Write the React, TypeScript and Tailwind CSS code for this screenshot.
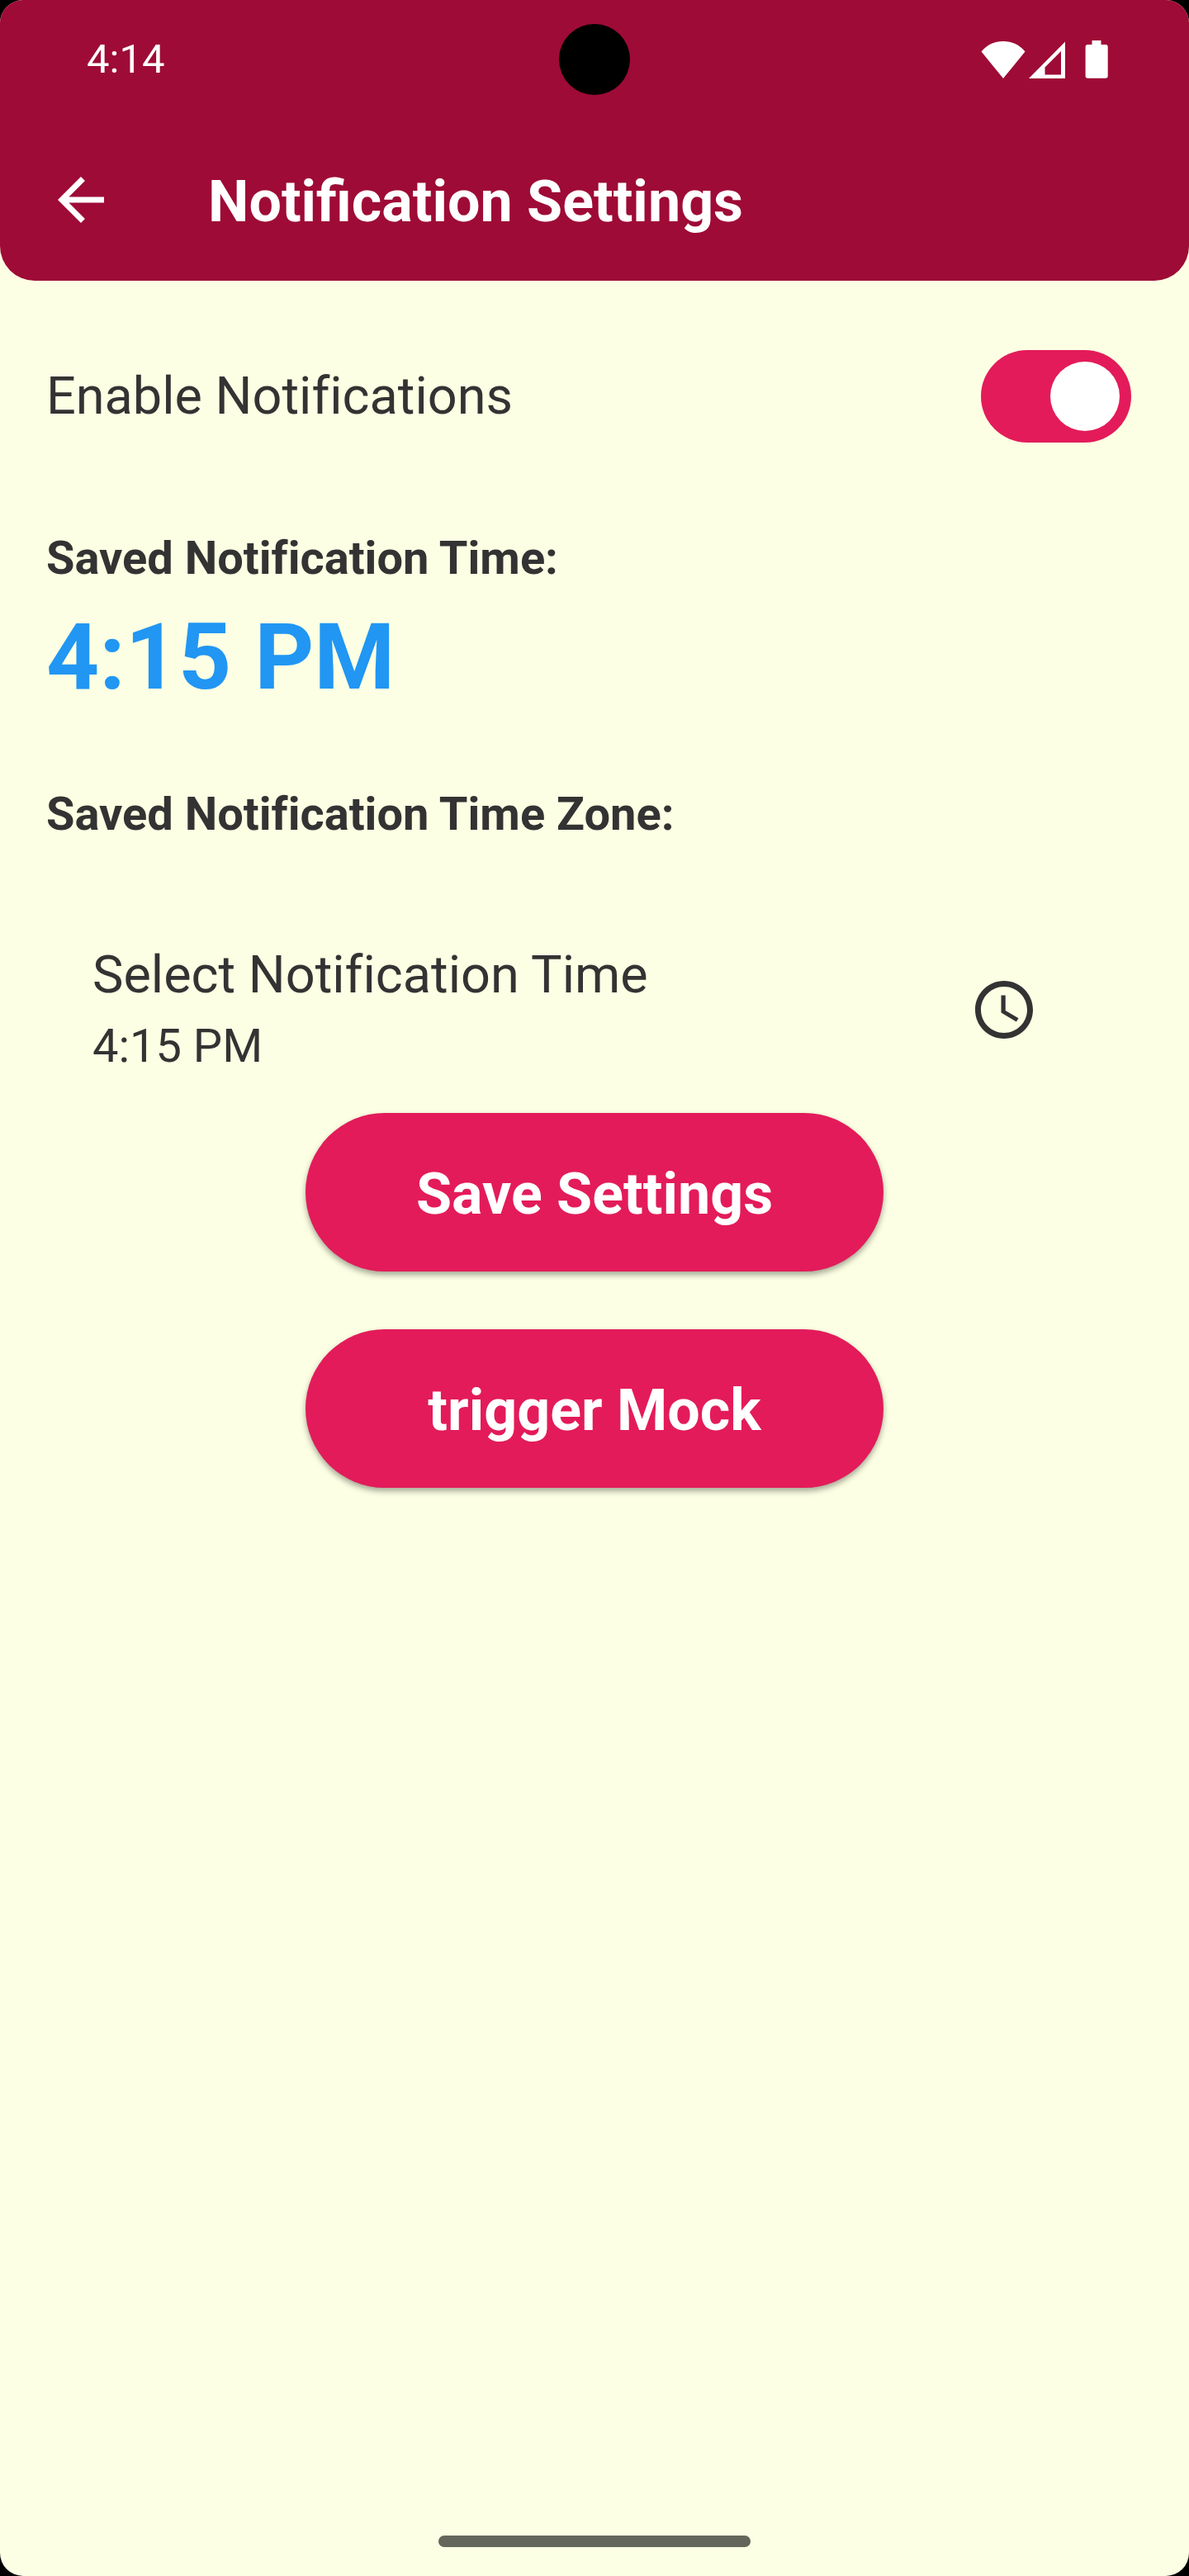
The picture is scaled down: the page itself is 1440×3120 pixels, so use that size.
import { useState } from "react";

function StatusBar() {
  return (
    <div className="relative flex h-36 items-center justify-between pr-[98px] pl-[105px]">
      <span className="text-[49px] leading-[56px]">4:14</span>
      <span className="absolute top-[29px] left-1/2 size-[86px] -translate-x-1/2 rounded-full bg-black" />
      <div className="flex items-center">
        <svg width="54" height="46" viewBox="0 0 54 46" fill="currentColor" aria-hidden="true">
          <path d="M27 46 .5 13.500C7.500 5 16.500 1 27 1s19.500 4 26.500 12.500z" />
        </svg>
        <svg className="ml-1" width="44" height="46" viewBox="0 0 44 46" fill="currentColor" aria-hidden="true">
          <path fillRule="evenodd" d="M44 1.500V46H0zM39 13 19.500 32.500V41.500H39z" />
        </svg>
        <svg className="ml-6" width="28" height="46" viewBox="0 0 28 46" fill="currentColor" aria-hidden="true">
          <path d="M8.500 0h11v5H25a2.700 2.700 0 0 1 2.700 2.700V43a2.700 2.700 0 0 1-2.700 2.700H3.300A2.700 2.700 0 0 1 .6 43V7.700A2.700 2.700 0 0 1 3.300 5h5.200z" />
        </svg>
      </div>
    </div>
  );
}

function PillButton({ children }: { children: string }) {
  return (
    <button
      type="button"
      className="flex h-48 w-[700px] max-w-full items-center justify-center rounded-full bg-[#e31b5a] pt-1 text-[70px] leading-[84px] font-bold text-white shadow-[0_4px_7px_rgba(0,0,0,0.35)]"
    >
      {children}
    </button>
  );
}

export default function App() {
  const [enabled, setEnabled] = useState(true);
  const time = "4:15 PM";

  return (
    <div className="bg-black font-['Roboto',sans-serif]">
      <div className="flex min-h-screen flex-col overflow-hidden rounded-[28px] bg-[#fcffe3] text-[#333333]">
        <header className="rounded-b-[42px] bg-[#9e0b36] text-white">
          <StatusBar />
          <div className="flex h-[196px] items-center gap-28 px-14">
            <button type="button" aria-label="Back" className="shrink-0">
              <svg width="84" height="84" viewBox="0 0 24 24" fill="currentColor" aria-hidden="true">
                <path d="M20 11H7.830l5.590-5.590L12 4l-8 8 8 8 1.410-1.410L7.830 13H20v-2z" />
              </svg>
            </button>
            <h1 className="pt-1 text-[70px] leading-[84px] font-bold">Notification Settings</h1>
          </div>
        </header>

        <main className="px-14 pt-[84px] [font-variant-ligatures:none]">
          <div className="flex items-center justify-between pr-[14px]">
            <label htmlFor="enable" className="text-[63px] leading-[88px]">
              Enable Notifications
            </label>
            <input
              id="enable"
              type="checkbox"
              role="switch"
              checked={enabled}
              onChange={(e) => setEnabled(e.target.checked)}
              className="h-28 w-[182px] shrink-0 cursor-pointer appearance-none rounded-full bg-gray-400 p-[14px] before:block before:size-[84px] before:rounded-full before:bg-white checked:bg-[#e31b5a] checked:before:ml-[70px]"
            />
          </div>

          <h2 className="mt-[98px] text-[56px] leading-[84px] font-bold">Saved Notification Time:</h2>
          <p className="mt-[6px] text-[112px] leading-[144px] font-bold text-[#2196f3]">{time}</p>
          <h2 className="mt-[76px] text-[56px] leading-[84px] font-bold">Saved Notification Time Zone:</h2>

          <button
            type="button"
            className="mt-[109px] flex w-full items-center justify-between pr-[126px] pl-14 text-left"
          >
            <span className="flex flex-col">
              <span className="text-[63px] leading-[88px]">Select Notification Time</span>
              <span className="text-[56px] leading-[84px]">{time}</span>
            </span>
            <svg width="84" height="84" viewBox="0 0 24 24" fill="currentColor" aria-hidden="true">
              <path d="M11.990 2C6.470 2 2 6.480 2 12s4.470 10 9.990 10C17.520 22 22 17.520 22 12S17.520 2 11.990 2zM12 20c-4.420 0-8-3.580-8-8s3.580-8 8-8 8 3.580 8 8-3.580 8-8 8z" />
              <path d="M12.500 7H11v6l5.250 3.150.75-1.230-4.500-2.670z" />
            </svg>
          </button>

          <div className="mt-[39px] flex flex-col items-center gap-[70px]">
            <PillButton>Save Settings</PillButton>
            <PillButton>trigger Mock</PillButton>
          </div>
        </main>

        <footer className="mt-auto flex justify-center pt-14 pb-[35px]">
          <span className="h-[14px] w-[378px] rounded-full bg-[#65665b]" />
        </footer>
      </div>
    </div>
  );
}
